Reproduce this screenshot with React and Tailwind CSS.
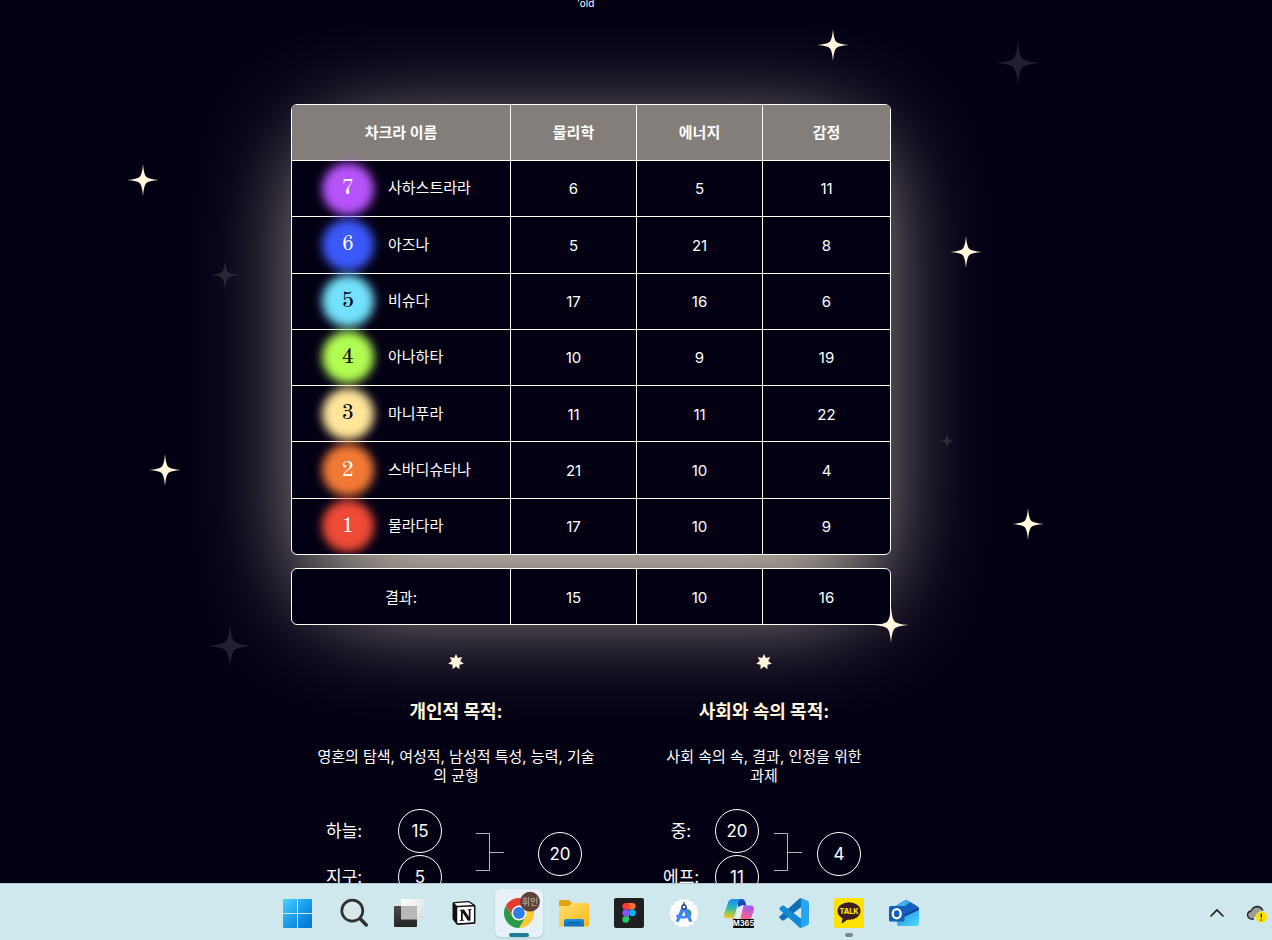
import React from "react";
import { SiNotion } from "react-icons/si";

const COLUMNS = ["차크라 이름", "물리학", "에너지", "감정"];

const CHAKRAS = [
  { level: 7, name: "사하스트라라", values: [6, 5, 11], glow: "bg-[#b653fb]", ink: "text-white" },
  { level: 6, name: "아즈나", values: [5, 21, 8], glow: "bg-[#3b58fa]", ink: "text-white" },
  { level: 5, name: "비슈다", values: [17, 16, 6], glow: "bg-[#73e1fb]", ink: "text-[#040014]" },
  { level: 4, name: "아나하타", values: [10, 9, 19], glow: "bg-[#b2fd52]", ink: "text-[#040014]" },
  { level: 3, name: "마니푸라", values: [11, 11, 22], glow: "bg-[#ffe59a]", ink: "text-[#040014]" },
  { level: 2, name: "스바디슈타나", values: [21, 10, 4], glow: "bg-[#f27935]", ink: "text-white" },
  { level: 1, name: "물라다라", values: [17, 10, 9], glow: "bg-[#ef4a35]", ink: "text-white" },
];

const RESULTS = [15, 10, 16];

const STARS = [
  { x: 542, y: 45, size: 32, dim: false },
  { x: 727, y: 63, size: 44, dim: true },
  { x: -148, y: 180, size: 32, dim: false },
  { x: -66, y: 275, size: 30, dim: true },
  { x: 675, y: 252, size: 32, dim: false },
  { x: 656, y: 441, size: 18, dim: true },
  { x: -126, y: 470, size: 32, dim: false },
  { x: 737, y: 524, size: 32, dim: false },
  { x: 600, y: 625, size: 36, dim: false },
  { x: -61, y: 646, size: 44, dim: true },
];

function SkyStar({ x, y, size, dim }) {
  return (
    <svg
      aria-hidden="true"
      viewBox="0 0 40 40"
      width={size}
      height={size}
      className={dim ? "absolute text-white/12" : "absolute text-[#fff6dc]"}
      style={{ left: x - size / 2, top: y - size / 2 }}
    >
      <path
        fill="currentColor"
        d="M20 0C20.8 9 22 13.500 24 16C26.500 18.200 31 19.200 40 20C31 20.800 26.500 21.800 24 24C22 26.500 20.800 31 20 40C19.200 31 18 26.500 16 24C13.500 21.800 9 20.800 0 20C9 19.200 13.500 18.200 16 16C18 13.500 19.200 9 20 0Z"
      />
    </svg>
  );
}

const SPARK_POINTS = Array.from({ length: 14 }, (_, i) => {
  const radius = i % 2 === 0 ? 8 : 4.4;
  const angle = (Math.PI * i) / 7 - Math.PI / 2;
  return `${8 + radius * Math.cos(angle)},${8 + radius * Math.sin(angle)}`;
}).join(" ");

function Spark() {
  return (
    <svg aria-hidden="true" viewBox="0 0 16 16" className="size-4 text-[#fff6dc]">
      <polygon points={SPARK_POINTS} fill="currentColor" />
    </svg>
  );
}

function ChakraTable() {
  return (
    <table className="relative w-full table-fixed border-separate border-spacing-0 overflow-hidden rounded-md border border-white bg-[#040014] text-center text-[15px] h-[451px]">
      <colgroup>
        <col className="w-[218px]" />
        <col className="w-[126px]" />
        <col className="w-[126px]" />
        <col />
      </colgroup>
      <thead>
        <tr className="bg-[#837e79]">
          {COLUMNS.map((title) => (
            <th
              key={title}
              scope="col"
              className="h-[55px] border-l border-white px-0 pt-0.5 pb-0 font-bold first:border-l-0"
            >
              {title}
            </th>
          ))}
        </tr>
      </thead>
      <tbody>
        {CHAKRAS.map((row) => (
          <tr key={row.level}>
            <th scope="row" className="h-14 border-t border-white p-0 font-normal">
              <div className="flex items-center gap-4 pl-8">
                <span className="relative flex size-12 shrink-0 items-center justify-center">
                  <span className={`absolute -inset-0.5 rounded-full blur-[5px] ${row.glow}`} />
                  <span
                    className={`relative font-['Old_Standard_TT','Liberation_Serif',serif] text-[22px] font-normal ${row.ink}`}
                  >
                    {row.level}
                  </span>
                </span>
                {row.name}
              </div>
            </th>
            {row.values.map((value, i) => (
              <td key={i} className="border-t border-l border-white px-0 pt-0.5 pb-0">
                {value}
              </td>
            ))}
          </tr>
        ))}
      </tbody>
    </table>
  );
}

function ResultTable() {
  return (
    <table className="relative mt-[13px] h-[57px] w-full table-fixed border-separate border-spacing-0 rounded-md border border-white bg-[#040014] text-center text-[15px]">
      <colgroup>
        <col className="w-[218px]" />
        <col className="w-[126px]" />
        <col className="w-[126px]" />
        <col />
      </colgroup>
      <tbody>
        <tr>
          <th scope="row" className="px-0 pt-1 pb-0 font-normal">결과:</th>
          {RESULTS.map((value, i) => (
            <td key={i} className="border-l border-white px-0 pt-1 pb-0">
              {value}
            </td>
          ))}
        </tr>
      </tbody>
    </table>
  );
}

function Ring({ children }) {
  return (
    <span className="flex size-11 items-center justify-center rounded-full border border-white pt-0.5 text-[17px]">
      {children}
    </span>
  );
}

function Bracket() {
  return (
    <svg aria-hidden="true" viewBox="0 0 28 38" className="mb-1 h-[38px] w-7 text-white/70">
      <path d="M0 .5H13.500V37.500H0M13.500 19.500H28" fill="none" stroke="currentColor" />
    </svg>
  );
}

function Purpose({ title, text, parts, total, width, rowGap, gap }) {
  return (
    <section className={`flex flex-col items-center ${width}`}>
      <Spark />
      <h2 className="mt-[31px] text-[18px] leading-[22px] font-bold text-[#fff6dc]">{title}</h2>
      <p className="mt-6 text-center text-[15px] leading-[19px]">{text}</p>
      <div className={`mt-6 flex items-center pr-1 ${gap}`}>
        <dl className="flex flex-col gap-0.5">
          {parts.map((part) => (
            <div key={part.label} className={`flex items-center ${rowGap}`}>
              <dt className="w-9 pt-0.5 text-center text-[17px] whitespace-nowrap">{part.label}</dt>
              <dd>
                <Ring>{part.value}</Ring>
              </dd>
            </div>
          ))}
        </dl>
        <Bracket />
        <Ring>{total}</Ring>
      </div>
    </section>
  );
}

function Icon({ children }) {
  return (
    <svg aria-hidden="true" viewBox="0 0 32 32" className="size-8 overflow-visible">
      {children}
    </svg>
  );
}

function WindowsIcon() {
  return (
    <Icon>
      <defs>
        <linearGradient id="win" gradientUnits="userSpaceOnUse" x1="0" y1="2" x2="29" y2="31">
          <stop offset="0" stopColor="#4fd0ff" />
          <stop offset="0.5" stopColor="#1a9cec" />
          <stop offset="1" stopColor="#0070cf" />
        </linearGradient>
      </defs>
      <path
        fill="url(#win)"
        d="M1 2H14V16H0V3Q0 2 1 2ZM15 2H28Q29 2 29 3V16H15ZM0 17H14V31H1Q0 31 0 30ZM15 17H29V30Q29 31 28 31H15Z"
      />
    </Icon>
  );
}

function SearchIcon() {
  return (
    <Icon>
      <circle cx="14.300" cy="13.700" r="10.500" fill="#d9e6ea" stroke="#30302f" strokeWidth="2.700" />
      <path d="M22.500 22L28.300 28" stroke="#30302f" strokeWidth="3.400" strokeLinecap="round" />
    </Icon>
  );
}

function TaskViewIcon() {
  return (
    <Icon>
      <defs>
        <linearGradient id="tvDark" x1="0" y1="0" x2="0" y2="1">
          <stop offset="0" stopColor="#4c4c4c" />
          <stop offset="1" stopColor="#242424" />
        </linearGradient>
        <linearGradient id="tvLight" x1="0" y1="0" x2="1" y2="1">
          <stop offset="0" stopColor="#ffffff" />
          <stop offset="1" stopColor="#dcdcdc" />
        </linearGradient>
      </defs>
      <rect x="8" y="2" width="23" height="20.500" rx="1" fill="url(#tvLight)" />
      <rect x="1" y="9" width="23" height="21" rx="1" fill="url(#tvDark)" />
      <path d="M8 9H23Q24 9 24 10V22.500H8Z" fill="#b8b8b8" />
    </Icon>
  );
}

function NotionIcon() {
  return (
    <Icon>
      <path
        d="M5.500 5.500L20.500 4.500L27 9V26L25 27.500L10 28L5.500 22.500Z"
        fill="#fff"
        stroke="#fff"
        strokeWidth="1.500"
        strokeLinejoin="round"
      />
      <SiNotion x="4" y="4" size="24" color="#111" />
    </Icon>
  );
}

function ChromeIcon() {
  return (
    <Icon>
      <path d="M16 16L3 8.500A15 15 0 0 1 29 8.500Z" fill="#e33b2e" />
      <path d="M16 8.500H29A15 15 0 0 1 16 31L22.500 19.700Z" fill="#fcc934" />
      <path d="M9.500 19.700L3 8.500A15 15 0 0 0 16 31L22.500 19.700Z" fill="#2a9a48" />
      <path d="M3 8.500L9.500 19.700L16 16V8.500Z" fill="#e33b2e" />
      <circle cx="16" cy="16" r="7.500" fill="#fff" />
      <circle cx="16" cy="16" r="5.900" fill="#2f7de9" />
      <circle cx="27" cy="4.700" r="9.900" fill="#5d4138" />
      <text x="27" y="8" textAnchor="middle" fontSize="9" fill="#cbbdb7" fontFamily="Noto Sans CJK KR, sans-serif">
        휘인
      </text>
    </Icon>
  );
}

function FolderIcon() {
  return (
    <Icon>
      <defs>
        <linearGradient id="folder" x1="0" y1="0" x2="1" y2="1">
          <stop offset="0" stopColor="#ffdf73" />
          <stop offset="1" stopColor="#f9b915" />
        </linearGradient>
        <linearGradient id="drawer" x1="0" y1="0" x2="0" y2="1">
          <stop offset="0" stopColor="#1a93dd" />
          <stop offset="1" stopColor="#0b6fc0" />
        </linearGradient>
      </defs>
      <path d="M1 4.500Q1 3 2.500 3H10Q11 3 12 4L14 6V12H1Z" fill="#dfa311" />
      <path d="M1 9H11L14 6H29.500Q31 6 31 7.500V28Q31 29.500 29.500 29.500H2.500Q1 29.500 1 28Z" fill="url(#folder)" />
      <path d="M6 29.500V24Q6 22 8 22H24Q26 22 26 24V29.500Z" fill="url(#drawer)" />
      <path d="M10 25.700H22" stroke="#0a4f94" strokeWidth="1" strokeLinecap="round" />
    </Icon>
  );
}

function FigmaIcon() {
  return (
    <Icon>
      <rect x="1" y="1" width="30" height="30" rx="2" fill="#1f1f1f" />
      <path d="M16 6H12.700A3.300 3.300 0 0 0 12.700 12.600H16Z" fill="#ff3737" />
      <path d="M16 6H19.300A3.300 3.300 0 0 1 19.300 12.600H16Z" fill="#ff7237" />
      <path d="M16 12.600H12.700A3.300 3.300 0 0 0 12.700 19.200H16Z" fill="#874fff" />
      <circle cx="19.300" cy="15.900" r="3.300" fill="#00b6ff" />
      <path d="M16 19.200H12.700A3.300 3.300 0 1 0 16 22.500Z" fill="#24cb71" />
    </Icon>
  );
}

const SCALLOPS = Array.from({ length: 14 }, (_, i) => {
  const angle = (Math.PI * 2 * i) / 14;
  return { cx: 16 + 11.6 * Math.cos(angle), cy: 16 + 11.6 * Math.sin(angle) };
});

function AndroidStudioIcon() {
  return (
    <Icon>
      <circle cx="16" cy="16" r="12.800" fill="#fff" />
      {SCALLOPS.map((s, i) => (
        <circle key={i} cx={s.cx} cy={s.cy} r="2.800" fill="#fff" />
      ))}
      <path d="M17 12.500A4.500 4.500 0 0 1 23.500 16.500Q23 19.500 20 19.500H17Z" fill="#2f9e56" />
      <path d="M15.200 5H16.800V8H15.200Z" fill="#3c6fc9" />
      <path
        d="M14.800 8.500L8.500 24L10.200 24.300L17 11ZM17.200 8.500L23.500 24L21.800 24.300L15 11Z"
        fill="#4285f4"
        stroke="#4285f4"
        strokeWidth="1.300"
      />
      <path d="M8.500 18.500Q16 22.500 22.500 18" fill="none" stroke="#4285f4" strokeWidth="2.600" />
      <circle cx="16" cy="10" r="2" fill="#fff" stroke="#24416f" strokeWidth="1.400" />
    </Icon>
  );
}

function CopilotIcon() {
  return (
    <Icon>
      <defs>
        <linearGradient id="copA" x1="0.3" y1="0" x2="0.2" y2="1">
          <stop offset="0" stopColor="#1b8df0" />
          <stop offset="0.45" stopColor="#2db4b4" />
          <stop offset="0.75" stopColor="#9bcb4a" />
          <stop offset="1" stopColor="#f7c81e" />
        </linearGradient>
        <linearGradient id="copB" x1="0.6" y1="0" x2="0.3" y2="1">
          <stop offset="0" stopColor="#a25cf5" />
          <stop offset="0.5" stopColor="#ea5c9c" />
          <stop offset="1" stopColor="#ff8a4c" />
        </linearGradient>
      </defs>
      <path d="M14 2H18.500Q21.500 2 22.300 5L23.500 8.500H19Q16.500 8.500 15.800 11L14 5Z" fill="#1749b8" />
      <path
        d="M9.500 2H18.500Q16 2.500 15.100 6L11.700 18Q10.800 21 7.800 21H4Q0 21 1.300 16.500L5 5.500Q6.300 2 9.500 2Z"
        fill="url(#copA)"
      />
      <path
        d="M21.500 8.500H27.500Q32 8.500 30.700 13.500L27 24.500Q25.800 28 22.500 28H13.500Q15.500 27.500 16.500 24L19.500 12Q20 8.500 21.500 8.500Z"
        fill="url(#copB)"
      />
      <path d="M9 21L10.500 28H14Q16.500 28 17.400 25L18.500 21Z" fill="#f6a33d" />
      <path d="M15.500 11Q16.500 8.500 18.500 8.500H20.500L17 22H12.300Z" fill="#e6eff8" />
      <rect x="10" y="22" width="21" height="9" rx="1" fill="#000" />
      <text x="20.500" y="29.300" textAnchor="middle" fontSize="7.500" fontWeight="700" fill="#fff" fontFamily="Inter, sans-serif">
        M365
      </text>
    </Icon>
  );
}

function VsCodeIcon() {
  return (
    <Icon>
      <path d="M23.500 1L24 9.500L6 23.200Q5 24 4 23.200L1.700 21.200Q.7 20.200 1.700 19.200L21.500 1.500Z" fill="#0f6fb8" />
      <path d="M24 22.500L6 8.800Q5 8 4 8.800L1.700 10.800Q.7 11.800 1.700 12.800L21.500 30.500L23.500 31Z" fill="#1489d4" />
      <path
        d="M23 1L29.500 3.800Q31 4.500 31 6V26Q31 27.500 29.500 28.200L23 31Q21.800 31 21.500 30.500Q23.500 31 23.500 29V3Q23.500 1 21.500 1.500Z"
        fill="#29a5f2"
      />
      <path d="M23.300 2.500V29.500L30 27.500V4.500Z" fill="#29a5f2" />
    </Icon>
  );
}

function KakaoIcon() {
  return (
    <Icon>
      <rect x="1" y="1" width="30" height="30" rx="2.500" fill="#fde100" />
      <ellipse cx="16" cy="14" rx="11.500" ry="8.700" fill="#3b1f1e" />
      <path d="M10 19L8.700 25.500Q8.700 26.500 9.700 26L16 21.500Z" fill="#3b1f1e" />
      <text x="16" y="16.800" textAnchor="middle" fontSize="7.200" fontWeight="800" fill="#fde100" fontFamily="Inter, sans-serif">
        TALK
      </text>
    </Icon>
  );
}

function OutlookIcon() {
  return (
    <Icon>
      <defs>
        <linearGradient id="mail" x1="0" y1="0" x2="1" y2="1">
          <stop offset="0" stopColor="#1b8fe0" />
          <stop offset="1" stopColor="#53d8fb" />
        </linearGradient>
      </defs>
      <path d="M6 10L16.500 3.600Q18 2.700 19.500 3.600L29.500 9.500Q31 10.500 31 12V20L10 24L6 20Z" fill="#1769c4" />
      <path d="M7 9.500L17 3.400L22 5L10 14Z" fill="#3db3ef" />
      <path d="M10 14L23 5.500L30 10L14 20Z" fill="#1460bd" />
      <path d="M14 19L30.800 10.500V15L18 22Z" fill="#0b3f9a" />
      <path d="M9 23L31 13V26.500Q31 29 28.500 29H11Q9 29 9 27Z" fill="url(#mail)" />
      <rect x="1" y="9" width="15.500" height="15.500" rx="1.500" fill="#0f5fb8" />
      <ellipse cx="8.700" cy="16.800" rx="4" ry="4.600" fill="none" stroke="#fff" strokeWidth="2.300" />
    </Icon>
  );
}

const APPS = [
  { label: "시작", icon: WindowsIcon },
  { label: "검색", icon: SearchIcon },
  { label: "작업 보기", icon: TaskViewIcon },
  { label: "Notion", icon: NotionIcon },
  { label: "Chrome", icon: ChromeIcon, state: "active" },
  { label: "파일 탐색기", icon: FolderIcon },
  { label: "Figma", icon: FigmaIcon },
  { label: "Android Studio", icon: AndroidStudioIcon },
  { label: "Microsoft 365 Copilot", icon: CopilotIcon },
  { label: "Visual Studio Code", icon: VsCodeIcon },
  { label: "KakaoTalk", icon: KakaoIcon, state: "running" },
  { label: "Outlook", icon: OutlookIcon },
];

function Taskbar() {
  return (
    <footer className="relative flex h-[57px] shrink-0 items-center border-t border-[#b4c9cf] bg-[#cfe8ee] pt-0.5">
      <nav className="flex flex-1 justify-center gap-[7px]">
        {APPS.map(({ label, icon: AppIcon, state }) => (
          <button
            key={label}
            type="button"
            aria-label={label}
            className={
              state === "active"
                ? "relative flex size-12 items-center justify-center rounded-md bg-[#e6f2f7] shadow-sm"
                : "relative flex size-12 items-center justify-center rounded-md"
            }
          >
            <AppIcon />
            {state === "active" && (
              <span className="absolute inset-x-0 bottom-0 mx-auto h-1 w-5 rounded-full bg-[#1f7f96]" />
            )}
            {state === "running" && (
              <span className="absolute inset-x-0 bottom-0 mx-auto h-1 w-2 rounded-full bg-[#7d8a8e]" />
            )}
          </button>
        ))}
      </nav>
      <div className="flex items-center gap-[21px] pr-1 pl-1.5">
        <button type="button" aria-label="숨겨진 아이콘 표시">
          <svg aria-hidden="true" viewBox="0 0 16 16" className="size-4">
            <path d="M2 11L8 5L14 11" fill="none" stroke="#1b1b1b" strokeWidth="1.600" strokeLinecap="round" />
          </svg>
        </button>
        <button type="button" aria-label="OneDrive">
          <svg aria-hidden="true" viewBox="0 0 22 22" className="size-[22px]">
            <path
              d="M5 16.500Q1.500 16 1.500 12.500Q2 9.500 5 9Q7 4.500 11.500 4.500Q15.500 5 16.500 8.500Q13 9 11 12Q9 16 5 16.500Z"
              fill="#9b9b9b"
            />
            <path
              d="M8 17H5Q1.500 16 1.500 12.500Q2 9.500 5 9Q7 4.500 11.500 4.500Q15.500 5 17 8.500"
              fill="none"
              stroke="#222"
              strokeWidth="1.300"
            />
            <circle cx="15.300" cy="15" r="5.800" fill="#f9e000" />
            <path d="M15.300 11.500V15.800M15.300 17.200V18.700" stroke="#333" strokeWidth="1.400" />
          </svg>
        </button>
      </div>
    </footer>
  );
}

export default function App() {
  return (
    <div className="flex h-screen flex-col bg-[#040014] font-['Inter','Noto_Sans_CJK_KR',sans-serif] text-white">
      <main className="flex min-h-0 flex-1 justify-center overflow-hidden pr-[90px]">
        <div className="relative w-[600px] shrink-0">
          <p className="h-[104px] pr-2.5 text-center text-[10px] leading-[6px]">′old</p>
          <div className="relative">
            <div className="absolute inset-x-5 top-9 bottom-6 rounded-[40px] bg-[#fff6dc] opacity-80 blur-[54px]" />
            <ChakraTable />
            <ResultTable />
          </div>
          <div className="relative mt-[29px] flex gap-[68px] pl-[25px]">
            <Purpose
              title="개인적 목적:"
              text="영혼의 탐색, 여성적, 남성적 특성, 능력, 기술의 균형"
              parts={[
                { label: "하늘:", value: 15 },
                { label: "지구:", value: 5 },
              ]}
              total={20}
              width="w-[280px]"
              rowGap="gap-9"
              gap="gap-[34px]"
            />
            <Purpose
              title="사회와 속의 목적:"
              text="사회 속의 속, 결과, 인정을 위한 과제"
              parts={[
                { label: "중:", value: 20 },
                { label: "에프:", value: 11 },
              ]}
              total={4}
              width="w-[200px]"
              rowGap="gap-4"
              gap="gap-[15px]"
            />
          </div>
          {STARS.map((star) => (
            <SkyStar key={`${star.x}:${star.y}`} {...star} />
          ))}
        </div>
      </main>
      <Taskbar />
    </div>
  );
}
